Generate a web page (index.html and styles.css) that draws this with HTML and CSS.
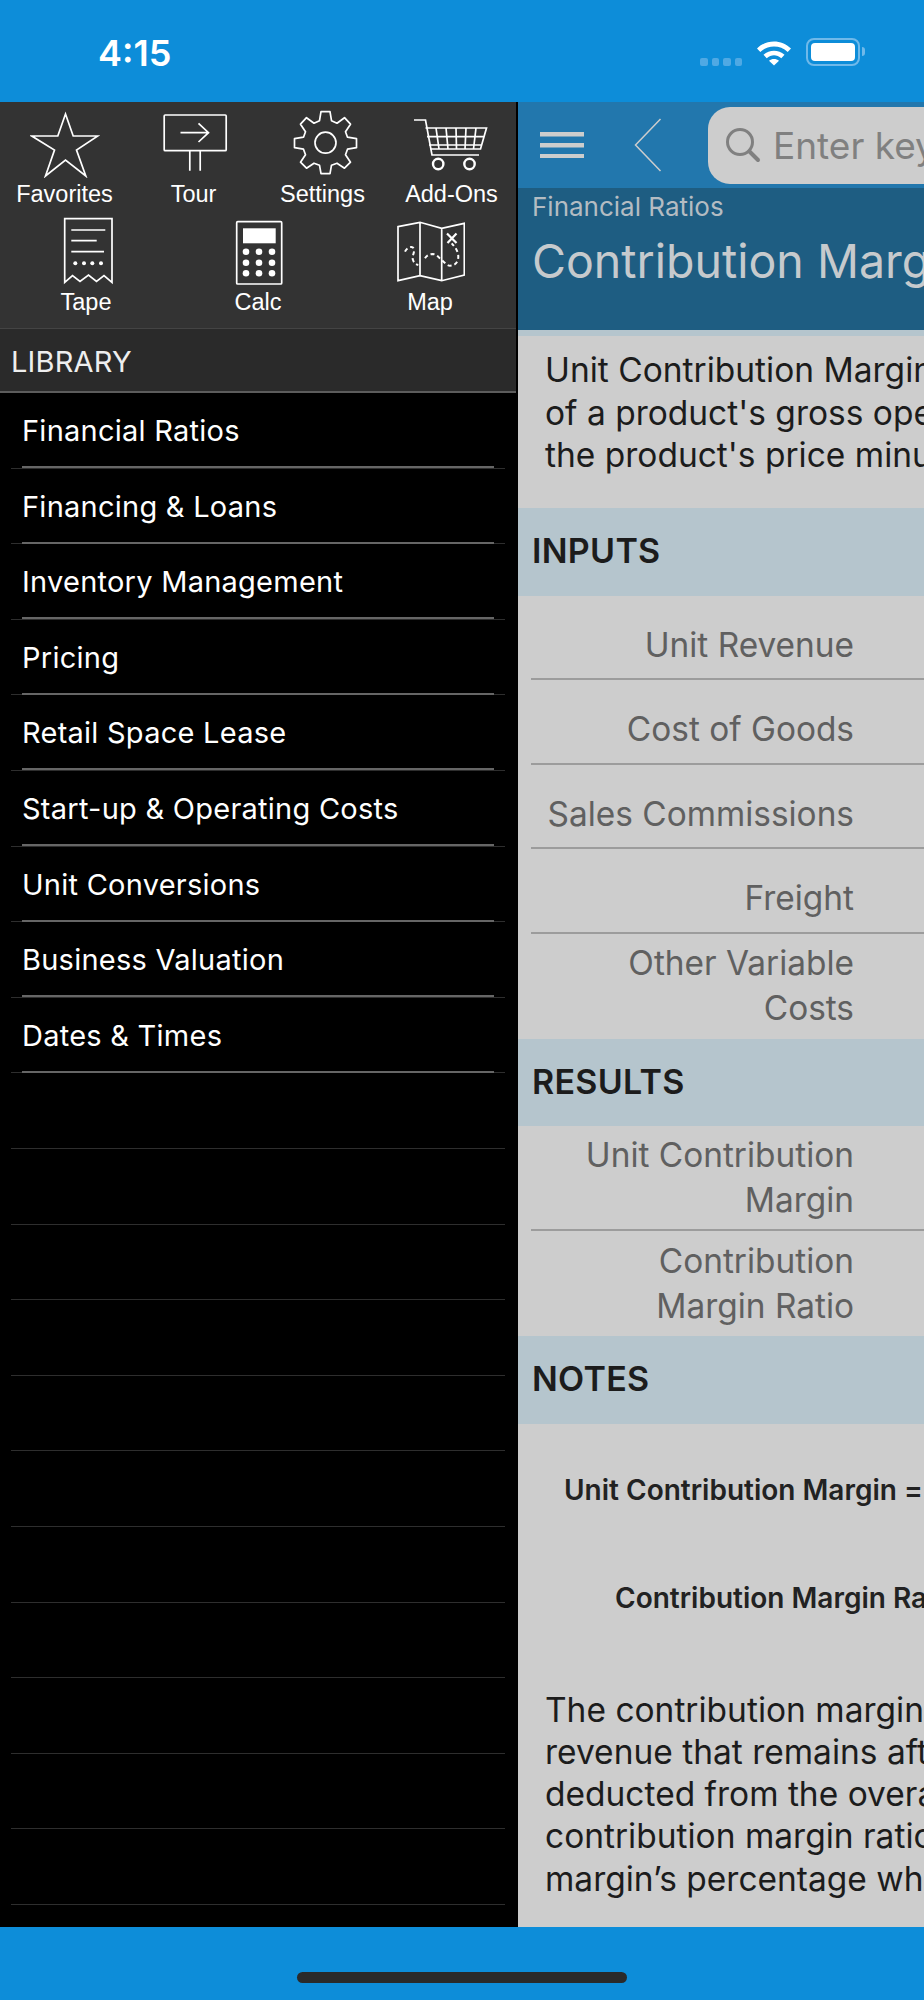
FILE: index.html
```html
<!DOCTYPE html>
<html lang="en">

<head>
  <meta charset="UTF-8">
  <meta name="viewport" content="width=device-width, initial-scale=1.0">
  <title>Contribution Margin</title>
  <link rel="stylesheet" href="styles.css">
</head>

<body>
  <div class="app">

    <!-- Status bar -->
    <header class="status-bar">
      <span class="clock">4:15</span>
      <div class="status-icons">
        <span class="signal"><i></i><i></i><i></i><i></i></span>
        <svg class="wifi" width="36" height="28" viewBox="0 0 36 28">
          <path d="M1 10.500C10.500 1 25.500 1 35 10.500L31.700 14C24 6.700 12 6.700 4.300 14Z" fill="#fff"/>
          <path d="M7.500 16.800C13.500 11.300 22.500 11.300 28.500 16.800L25.300 20.200C20.800 16.300 15.200 16.300 10.700 20.200Z" fill="#fff"/>
          <path d="M13 22.800C15.800 20.500 20.200 20.500 23 22.800L18 27.500Z" fill="#fff"/>
        </svg>
        <span class="battery"><b></b></span>
        <span class="battery-cap"></span>
      </div>
    </header>

    <div class="main">

      <!-- Left menu -->
      <aside class="sidebar">
        <div class="toolbar">
          <div class="tools tools-4">
            <a class="tool">
              <svg width="70" height="70" viewBox="0 0 70 70" fill="none" stroke="#fff" stroke-width="1.700">
                <path d="M35.500 6L43.200 28H67.800L46.500 42L55.800 68L35.500 52L15.500 68L24.500 42L1.800 28H27.800Z"/>
              </svg>
              <span>Favorites</span>
            </a>
            <a class="tool">
              <svg width="70" height="70" viewBox="0 0 70 70" fill="none" stroke="#fff" stroke-width="1.700">
                <rect x="5.200" y="7" width="62" height="35.700" rx="1"/>
                <path d="M21.500 24.700H49.500M39.500 15.300L49.500 24.700L39.500 34M30.800 42.700V62.700M41.200 42.700V62.700"/>
              </svg>
              <span>Tour</span>
            </a>
            <a class="tool">
              <svg width="70" height="70" viewBox="0 0 70 70" fill="none" stroke="#fff" stroke-width="1.700">
                <g transform="translate(3.500 -0.300)">
                  <path d="M29.500 4H38.500L40 13L45.500 15.500L53 10L59 16.500L54 24L56 29.500L65 31V40L56 41.500L54 47L59 54.500L53 60.500L45.500 55.500L40 57.500L38.500 66H29.500L28 57.500L22.500 55.500L15 60.500L9 54.500L14 47L12 41.500L3 40V31L12 29.500L14 24L9 16.500L15 10L22.500 15.500L28 13Z" stroke-linejoin="round"/>
                  <circle cx="34" cy="35" r="10.500"/>
                </g>
              </svg>
              <span>Settings</span>
            </a>
            <a class="tool">
              <svg width="76" height="70" viewBox="0 0 76 70" fill="none" stroke="#fff" stroke-width="1.700">
                <path d="M0 12H11.500L18 47H65"/>
                <path d="M11.500 20H72.500L66.500 41H16.500M13 28.700H70M15 37H67.500M22 20L25 41M32 20L34 41M42 20L42.500 41M52 20L51 41M62 20L59.500 41"/>
                <circle cx="24.200" cy="56" r="5.200" stroke-width="2.400"/>
                <circle cx="55.500" cy="56" r="5.200" stroke-width="2.400"/>
              </svg>
              <span>Add-Ons</span>
            </a>
          </div>
          <div class="tools tools-3">
            <a class="tool">
              <svg width="70" height="70" viewBox="0 0 70 70" fill="none" stroke="#fff" stroke-width="1.700">
                <path d="M13.700 2.700H61V66.300L53 59.500L45.500 65.500L37.500 59L29 65.500L21.500 59.500L13.700 66.300Z"/>
                <path d="M20.300 14H54.300M20.300 24.700H45.700M20.300 35.700H53"/>
                <g fill="#fff" stroke="none">
                  <circle cx="24.300" cy="47.300" r="2"/><circle cx="33" cy="47.300" r="2"/><circle cx="41.300" cy="47.300" r="2"/><circle cx="50" cy="47.300" r="2"/>
                </g>
              </svg>
              <span>Tape</span>
            </a>
            <a class="tool">
              <svg width="70" height="70" viewBox="0 0 70 70" fill="none" stroke="#fff" stroke-width="1.700">
                <rect x="13.700" y="5.700" width="45" height="62.300" rx="1"/>
                <rect x="20" y="12.300" width="32.700" height="15" fill="#fff" stroke="none"/>
                <g fill="#fff" stroke="none">
                  <circle cx="23" cy="35.700" r="3.300"/><circle cx="36" cy="35.700" r="3.300"/><circle cx="49" cy="35.700" r="3.300"/>
                  <circle cx="23" cy="46.700" r="3.300"/><circle cx="36" cy="46.700" r="3.300"/><circle cx="49" cy="46.700" r="3.300"/>
                  <circle cx="23" cy="57.300" r="3.300"/><circle cx="36" cy="57.300" r="3.300"/><circle cx="49" cy="57.300" r="3.300"/>
                </g>
              </svg>
              <span>Calc</span>
            </a>
            <a class="tool">
              <svg width="70" height="70" viewBox="0 0 70 70" fill="none" stroke="#fff" stroke-width="1.700">
                <path d="M3 10.700L25 6.300L46.700 12.300L69.300 7.300V59L46.700 64.700L25 59.700L3 64.700ZM25 6.300V59.700M46.700 12.300V64.700"/>
                <path d="M10 35.700C12 31 18.300 29 19 33.500C19.500 38 16.500 40 18 44C19 47 21 48.500 23.300 49M30 42.300C32 39 35 38 38 38C42 38.500 44 42 46.700 44C50 47 52.500 49.700 55 49.700C60 49.700 63.300 46 63.300 40.700C63.300 35 60 31 56.700 27.300" stroke-dasharray="4 3" stroke-width="2"/>
                <path d="M52 17.500L61.500 27M61.500 17.500L52.500 27" stroke-width="2.200"/>
              </svg>
              <span>Map</span>
            </a>
          </div>
        </div>

        <div class="library-head">LIBRARY</div>

        <ul class="library">
          <li><span>Financial Ratios</span></li>
          <li><span>Financing &amp; Loans</span></li>
          <li><span>Inventory Management</span></li>
          <li><span>Pricing</span></li>
          <li><span>Retail Space Lease</span></li>
          <li><span>Start-up &amp; Operating Costs</span></li>
          <li><span>Unit Conversions</span></li>
          <li><span>Business Valuation</span></li>
          <li><span>Dates &amp; Times</span></li>
          <li></li>
          <li></li>
          <li></li>
          <li></li>
          <li></li>
          <li></li>
          <li></li>
          <li></li>
          <li></li>
          <li></li>
          <li></li>
        </ul>
      </aside>

      <!-- Calculator page -->
      <section class="page">
        <div class="navbar">
          <svg class="menu-icon" width="44" height="26" viewBox="0 0 44 26" fill="#cdcdcd">
            <rect y="0" width="44" height="4.500"/>
            <rect y="11" width="44" height="4.500"/>
            <rect y="22" width="44" height="4.500"/>
          </svg>
          <svg class="back-icon" width="28" height="54" viewBox="0 0 28 54" fill="none" stroke="#cdcdcd" stroke-width="1.500">
            <path d="M26.500 1L1.500 27L26.500 53"/>
          </svg>
          <div class="search">
            <svg width="36" height="36" viewBox="0 0 36 36" fill="none" stroke="#808080" stroke-width="3">
              <circle cx="15" cy="15" r="12.500"/>
              <path d="M24.500 24.500L33 33" stroke-width="4" stroke-linecap="round"/>
            </svg>
            <span>Enter keywords</span>
          </div>
        </div>

        <div class="title-band">
          <div class="crumb">Financial Ratios</div>
          <h1>Contribution Margin</h1>
        </div>

        <div class="intro">
          <p>Unit Contribution Margin</p>
          <p>of a product's gross operating</p>
          <p>the product's price minus</p>
        </div>

        <h2 class="band">INPUTS</h2>
        <div class="field"><label>Unit Revenue</label></div>
        <div class="field"><label>Cost of Goods</label></div>
        <div class="field"><label>Sales Commissions</label></div>
        <div class="field"><label>Freight</label></div>
        <div class="field field-tall last"><label>Other Variable<br>Costs</label></div>

        <h2 class="band">RESULTS</h2>
        <div class="field field-tall"><label>Unit Contribution<br>Margin</label></div>
        <div class="field field-tall last"><label>Contribution<br>Margin Ratio</label></div>

        <h2 class="band">NOTES</h2>
        <div class="notes">
          <p class="formula formula-1">Unit Contribution Margin =</p>
          <p class="formula formula-2">Contribution Margin Ratio</p>
          <div class="notes-text">
            <p>The contribution margin</p>
            <p>revenue that remains after</p>
            <p>deducted from the overall</p>
            <p>contribution margin ratio</p>
            <p>margin’s percentage when</p>
          </div>
        </div>
      </section>
    </div>

    <footer class="home-bar"><span></span></footer>
  </div>
</body>

</html>
```

FILE: styles.css
```css
* {
  box-sizing: border-box;
}

html,
body {
  margin: 0;
  padding: 0;
}

body {
  width: 924px;
  height: 2000px;
  overflow: hidden;
  font-family: Inter, "Liberation Sans", sans-serif;
  background-color: #0d8dd9;
}

.app {
  display: flex;
  flex-direction: column;
  height: 2000px;
}

/* Status bar */
.status-bar {
  flex: 0 0 102px;
  display: flex;
  justify-content: space-between;
  background-color: #0d8dd9;
  color: #fff;
}

.clock {
  margin: 34px 0 0 98px;
  font-size: 36px;
  line-height: 38px;
  font-weight: 600;
}

.status-icons {
  display: flex;
  align-items: flex-start;
  margin: 38px 59px 0 0;
}

.signal {
  display: flex;
  gap: 4px;
  margin: 20px 14px 0 0;
}

.signal i {
  width: 7.500px;
  height: 7.500px;
  border-radius: 2px;
  background-color: #4fa9e4;
}

.wifi {
  margin-right: 14px;
}

.battery {
  width: 54px;
  height: 28px;
  padding: 3px;
  border: 2px solid #6fb9ea;
  border-radius: 8px;
}

.battery b {
  display: block;
  height: 100%;
  border-radius: 4px;
  background-color: #fff;
}

.battery-cap {
  width: 3px;
  height: 9px;
  margin: 9px 0 0 2px;
  border-radius: 0 3px 3px 0;
  background-color: #6fb9ea;
}

/* Main split */
.main {
  flex: 0 0 1825px;
  display: flex;
  overflow: hidden;
}

.sidebar {
  flex: 0 0 518px;
  border-right: 2px solid #000;
  background-color: #000;
}

.toolbar {
  height: 227px;
  padding-top: 6px;
  border-bottom: 1px solid #444;
  background-color: #333;
}

.tools {
  display: grid;
}

.tools-4 {
  grid-template-columns: repeat(4, 1fr);
  height: 108px;
}

.tools-3 {
  grid-template-columns: repeat(3, 1fr);
}

.tool {
  display: flex;
  flex-direction: column;
  align-items: center;
  color: #fff;
  font-family: "Liberation Sans", Arial, sans-serif;
  font-size: 23.500px;
  line-height: 30px;
}

.tool svg {
  display: block;
  margin-bottom: 1px;
}

.library-head {
  height: 64px;
  padding-left: 11px;
  border-bottom: 2px solid #5c5c5c;
  background-color: #2a2a2a;
  color: #eee;
  font-size: 29px;
  letter-spacing: 0.2px;
  line-height: 66px;
}

.library {
  margin: 0;
  padding: 0;
  list-style: none;
}

.library li {
  height: 75.6px;
  margin: 0 11px;
  border-bottom: 1px solid #2e2e2e;
}

.library li span {
  display: block;
  height: 75px;
  margin: 0 11px;
  border-bottom: 2px solid #666;
  color: #fff;
  font-size: 29px;
  letter-spacing: 0.25px;
  line-height: 76px;
  white-space: nowrap;
}

/* Right page */
.page {
  flex: 1;
  min-width: 0;
  overflow: hidden;
  background-color: #cdcdcd;
}

.navbar {
  display: flex;
  align-items: center;
  height: 86px;
  padding-left: 22px;
  background-color: #2277ad;
}

.back-icon {
  margin-left: 50px;
}

.search {
  flex: 1;
  display: flex;
  align-items: center;
  gap: 12px;
  height: 77px;
  margin: 0 -200px 0 46px;
  padding-left: 17px;
  border-radius: 22px;
  background-color: #cdcdcd;
  color: #808080;
  font-size: 37px;
  white-space: nowrap;
}

.title-band {
  height: 148px;
  padding-left: 14px;
  border-bottom: 6px solid #b5c5cd;
  background-color: #1e5d82;
  white-space: nowrap;
}

.crumb {
  padding-top: 3px;
  color: #b4bcc2;
  font-size: 26px;
  line-height: 32px;
}

h1 {
  margin: 10px 0 0;
  color: #c6cacd;
  font-size: 46.500px;
  font-weight: 400;
  line-height: 56px;
}

.intro {
  height: 172px;
  padding: 13px 0 0 27px;
  color: #1c1c1c;
  font-size: 33.500px;
  line-height: 42.500px;
  white-space: nowrap;
}

.intro p,
.notes-text p {
  margin: 0;
}

.band {
  height: 87.500px;
  margin: 0;
  padding-left: 14px;
  background-color: #b5c5cd;
  color: #1c1c1c;
  font-size: 34px;
  font-weight: 600;
  letter-spacing: 0.3px;
  line-height: 85px;
}

.field {
  display: flex;
  align-items: center;
  justify-content: flex-end;
  height: 84.500px;
  margin-left: 13px;
  padding: 17px 70px 0 0;
  border-bottom: 2px solid #9c9c9c;
  color: #606060;
  font-size: 33.400px;
  line-height: 45px;
  text-align: right;
  white-space: nowrap;
}

.field-tall {
  height: 105px;
  padding-top: 0;
}

.field.last {
  border-bottom: 0;
}

.notes {
  height: 506px;
  white-space: nowrap;
}

.formula {
  margin: 0;
  color: #222;
  font-size: 28px;
  font-weight: 600;
}

.formula-1 {
  padding: 49px 0 0 46px;
}

.formula-2 {
  padding: 74px 0 0 97px;
}

.notes-text {
  margin: 74px 0 0 27px;
  color: #1c1c1c;
  font-size: 33.500px;
  line-height: 42.300px;
}

/* Home indicator */
.home-bar {
  flex: 0 0 73px;
  display: flex;
  justify-content: center;
  padding-top: 45px;
  background-color: #0d8dd9;
}

.home-bar span {
  width: 330px;
  height: 11px;
  border-radius: 6px;
  background-color: #2a2a2a;
}
```
